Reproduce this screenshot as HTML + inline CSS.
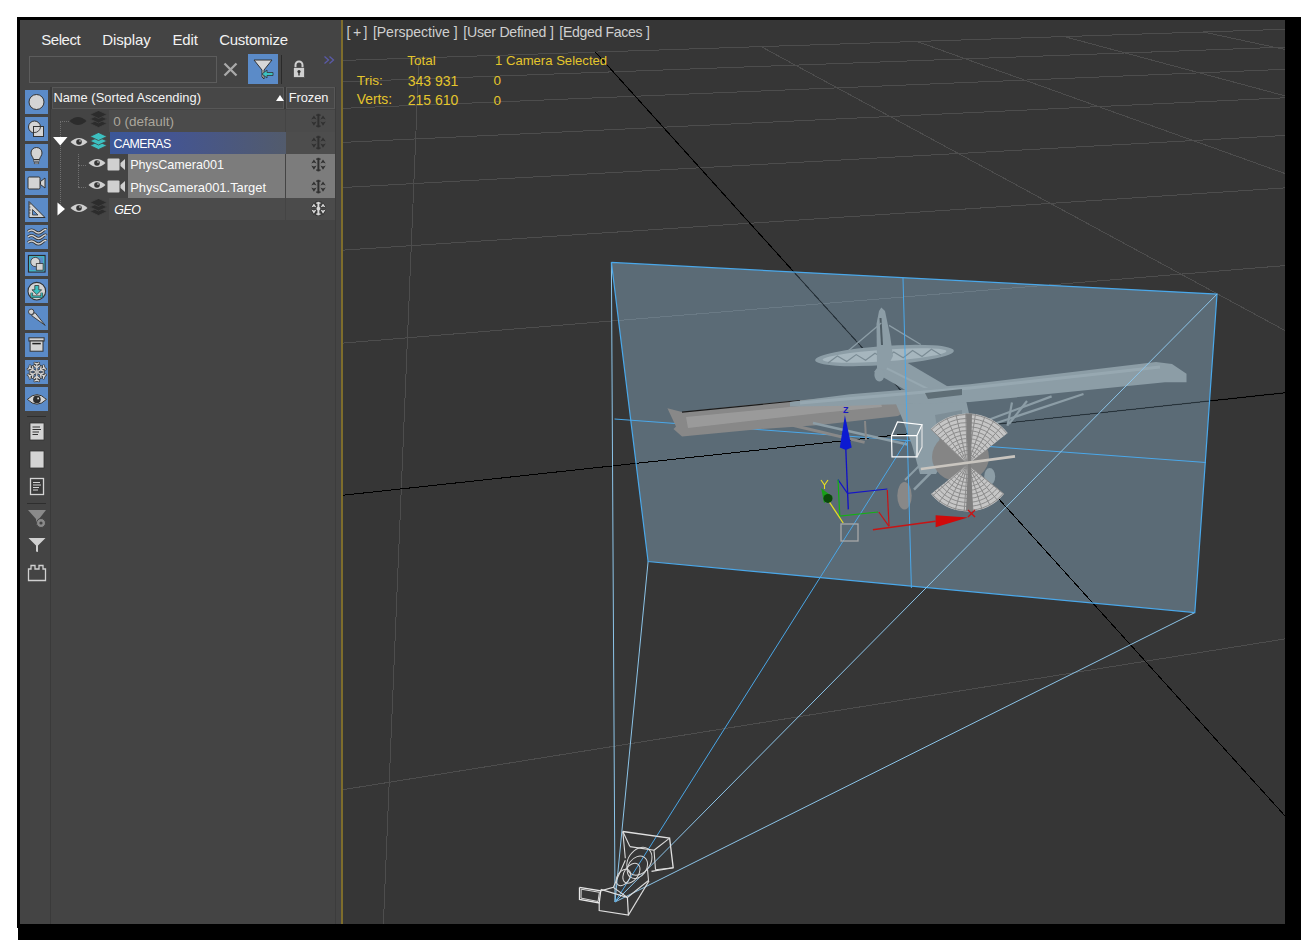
<!DOCTYPE html>
<html><head><meta charset="utf-8"><style>
html,body{margin:0;padding:0}
body{width:1305px;height:944px;background:#fff;position:relative;overflow:hidden;font-family:"Liberation Sans",sans-serif}
.t{position:absolute;white-space:nowrap;line-height:normal}
</style></head><body>
<div style="position:absolute;left:17px;top:17px;width:1284px;height:911px;background:#000"></div>
<div style="position:absolute;left:18px;top:924px;width:1283px;height:16px;background:#000"></div>
<div id="panel" style="position:absolute;left:20px;top:20px;width:321px;height:904px;background:#444;overflow:hidden">
  <!-- menu -->
  <div class="t" style="left:21.2px;top:11.3px;font-size:15px;letter-spacing:-0.45px;color:#f2f2f2">Select</div>
  <div class="t" style="left:82.2px;top:11.3px;font-size:15px;letter-spacing:-0.1px;color:#f2f2f2">Display</div>
  <div class="t" style="left:152.4px;top:11.3px;font-size:15px;letter-spacing:-0.1px;color:#f2f2f2">Edit</div>
  <div class="t" style="left:199.2px;top:11.3px;font-size:15px;letter-spacing:-0.25px;color:#f2f2f2">Customize</div>
  <!-- search box -->
  <div style="position:absolute;left:9px;top:36px;width:186px;height:25px;border:1px solid #5c5c5c;background:#434343"></div>
  <svg style="position:absolute;left:203px;top:41.5px" width="15" height="15"><path d="M1.5 1.5L13.5 13.5M13.5 1.5L1.5 13.5" stroke="#a9a9a9" stroke-width="2.3"/></svg>
  <div style="position:absolute;left:228px;top:34px;width:30px;height:30px;background:#5b8bc8"></div>
  <svg style="position:absolute;left:228px;top:34px" width="30" height="30"><path d="M6 6H24L16 16V25L14 23V16Z" fill="#d8d8d8" stroke="#333" stroke-width="1"/><path d="M14 20L19 16V18.5H25V21.5H19V24Z" fill="#3cc0c0" stroke="#333" stroke-width="0.8"/></svg>
  <div style="position:absolute;left:261px;top:35px;width:1px;height:29px;background:#2a2a2a"></div>
  <svg style="position:absolute;left:272px;top:39px" width="14" height="20"><path d="M3.5 9V6A3.5 3.5 0 0 1 10.5 6V9" fill="none" stroke="#d0d0d0" stroke-width="2"/><rect x="1.5" y="8.5" width="11" height="10" fill="#d0d0d0" stroke="#333" stroke-width="0.6"/><circle cx="7" cy="12.5" r="1.6" fill="#333"/><rect x="6.3" y="13" width="1.4" height="3.5" fill="#333"/></svg>
  <svg style="position:absolute;left:304px;top:36px" width="11" height="9"><path d="M0.5 0.5L4.5 4L0.5 7.5M5.5 0.5L9.5 4L5.5 7.5" fill="none" stroke="#5a5aa8" stroke-width="1.3"/></svg>
  <!-- column divider -->
  <div style="position:absolute;left:29.5px;top:67px;width:1px;height:837px;background:#3a3a3a"></div>
  <div style="position:absolute;left:315px;top:67px;width:1px;height:837px;background:#3c3c3c"></div>
  <!-- header -->
  <div style="position:absolute;left:30.7px;top:66.5px;width:234px;height:22px;background:#3a3a3a"></div>
  <div style="position:absolute;left:31.5px;top:67.3px;width:230.5px;height:19.5px;border:1px solid #575757;background:#474747"></div>
  <div style="position:absolute;left:265.3px;top:66.5px;width:50px;height:22px;background:#3a3a3a"></div>
  <div style="position:absolute;left:266.1px;top:67.3px;width:46.5px;height:19.5px;border:1px solid #575757;background:#474747"></div>
  <div class="t" style="left:33.4px;top:70.2px;font-size:12.9px;color:#f4f4f4">Name (Sorted Ascending)</div>
  <svg style="position:absolute;left:256px;top:75px" width="8" height="6"><path d="M0 6L4 0L8 6Z" fill="#fff"/></svg>
  <div class="t" style="left:268.8px;top:70.2px;font-size:12.9px;letter-spacing:-0.1px;color:#f4f4f4">Frozen</div>
  <!-- rows -->
  <div style="position:absolute;left:89px;top:89.5px;width:176px;height:22px;background:#4b4b4b"></div>
  <div style="position:absolute;left:266px;top:89.5px;width:49px;height:22px;background:#4b4b4b"></div>
  <div style="position:absolute;left:89.5px;top:111.5px;width:176px;height:22.5px;background:linear-gradient(90deg,#3b5798 0%,#445591 35%,#525b6c 100%)"></div>
  <div style="position:absolute;left:266px;top:111.5px;width:49px;height:22.5px;background:#4d4d4d"></div>
  <div style="position:absolute;left:107.7px;top:134px;width:157.5px;height:43.7px;background:#7c7c7c"></div>
  <div style="position:absolute;left:266px;top:134px;width:49px;height:43.7px;background:#7c7c7c"></div>
  <div style="position:absolute;left:89px;top:178.1px;width:176px;height:21.7px;background:#4b4b4b"></div>
  <div style="position:absolute;left:266px;top:178.1px;width:49px;height:21.7px;background:#4b4b4b"></div>
  <div class="t" style="left:93.3px;top:93.9px;font-size:13.5px;letter-spacing:0px;color:#aaa69c">0 (default)</div>
  <div class="t" style="left:93.6px;top:116.5px;font-size:12.4px;letter-spacing:-0.6px;color:#fff">CAMERAS</div>
  <div class="t" style="left:110.2px;top:138.3px;font-size:12.6px;letter-spacing:0px;color:#fafafa">PhysCamera001</div>
  <div class="t" style="left:110.2px;top:160px;font-size:12.95px;letter-spacing:0px;color:#fafafa">PhysCamera001.Target</div>
  <div class="t" style="left:94.2px;top:183px;font-size:12.4px;letter-spacing:-0.4px;color:#fff;font-style:italic">GEO</div>
  <div style="position:absolute;left:5px;top:70px;width:23px;height:24px;background:#5b8bc8"></div>
<svg style="position:absolute;left:5px;top:70px" width="23" height="24" viewBox="0 0 23 24"><circle cx="11.5" cy="12" r="7.5" fill="#d4d4d4" stroke="#333" stroke-width="1"/></svg>
<div style="position:absolute;left:5px;top:97px;width:23px;height:24px;background:#5b8bc8"></div>
<svg style="position:absolute;left:5px;top:97px" width="23" height="24" viewBox="0 0 23 24"><circle cx="9.5" cy="10" r="6" fill="#d4d4d4" stroke="#333" stroke-width="1"/><rect x="8.5" y="9.5" width="10" height="10" fill="#d4d4d4" stroke="#333" stroke-width="1"/><path d="M9 15.5A6 6 0 0 0 15.5 10" fill="none" stroke="#333" stroke-width="0.9"/></svg>
<div style="position:absolute;left:5px;top:124px;width:23px;height:24px;background:#5b8bc8"></div>
<svg style="position:absolute;left:5px;top:124px" width="23" height="24" viewBox="0 0 23 24"><path d="M11.5 3.5C15 3.5 17 6 17 9C17 11.5 15 13 14.5 15.5H8.5C8 13 6 11.5 6 9C6 6 8 3.5 11.5 3.5Z" fill="#d4d4d4" stroke="#333" stroke-width="1"/><rect x="8.5" y="16" width="6" height="1.6" fill="#d4d4d4" stroke="#333" stroke-width="0.5"/><rect x="9.2" y="18.3" width="4.6" height="1.5" fill="#d4d4d4" stroke="#333" stroke-width="0.5"/></svg>
<div style="position:absolute;left:5px;top:151px;width:23px;height:24px;background:#5b8bc8"></div>
<svg style="position:absolute;left:5px;top:151px" width="23" height="24" viewBox="0 0 23 24"><rect x="3" y="6" width="12" height="12" rx="1.2" fill="#d4d4d4" stroke="#333" stroke-width="1"/><path d="M15.5 10.5L20 7V17L15.5 13.5Z" fill="#d4d4d4" stroke="#333" stroke-width="1"/></svg>
<div style="position:absolute;left:5px;top:178px;width:23px;height:24px;background:#5b8bc8"></div>
<svg style="position:absolute;left:5px;top:178px" width="23" height="24" viewBox="0 0 23 24"><path d="M4 3.5L20 19.5H4Z" fill="#d4d4d4" stroke="#333" stroke-width="1"/><path d="M7.5 11.5L13 17H7.5Z" fill="#5b8bc8" stroke="#333" stroke-width="0.8"/><path d="M4 6H6M4 9H5.5M4 12H6M4 15H5.5" stroke="#333" stroke-width="0.7"/></svg>
<div style="position:absolute;left:5px;top:205px;width:23px;height:24px;background:#5b8bc8"></div>
<svg style="position:absolute;left:5px;top:205px" width="23" height="24" viewBox="0 0 23 24"><path d="M3 6.5Q6.5 3.5 10 6.5T17 6.5T21 5M3 12Q6.5 9 10 12T17 12T21 10.5M3 17.5Q6.5 14.5 10 17.5T17 17.5T21 16" fill="none" stroke="#333" stroke-width="3"/><path d="M3 6.5Q6.5 3.5 10 6.5T17 6.5T21 5M3 12Q6.5 9 10 12T17 12T21 10.5M3 17.5Q6.5 14.5 10 17.5T17 17.5T21 16" fill="none" stroke="#d4d4d4" stroke-width="1.6"/></svg>
<div style="position:absolute;left:5px;top:232px;width:23px;height:24px;background:#5b8bc8"></div>
<svg style="position:absolute;left:5px;top:232px" width="23" height="24" viewBox="0 0 23 24"><rect x="3.5" y="3.5" width="16.5" height="16.5" fill="#5b8bc8" stroke="#2a2a2a" stroke-width="1.2"/><rect x="4.8" y="4.8" width="14" height="14" fill="none" stroke="#3cc0c0" stroke-width="1.1"/><circle cx="10.3" cy="10" r="4.6" fill="#d4d4d4" stroke="#333" stroke-width="0.8"/><rect x="11.3" y="11.6" width="6.8" height="6.6" fill="#d4d4d4" stroke="#333" stroke-width="0.8"/></svg>
<div style="position:absolute;left:5px;top:259px;width:23px;height:24px;background:#5b8bc8"></div>
<svg style="position:absolute;left:5px;top:259px" width="23" height="24" viewBox="0 0 23 24"><circle cx="11.8" cy="12.2" r="8.8" fill="#d4d4d4" stroke="#333" stroke-width="1.1"/><path d="M9.8 6.5H13.8V10.8H16.6L11.8 15.6L7 10.8H9.8Z" fill="#3cc0c0" stroke="#333" stroke-width="0.8"/><path d="M6.8 13.8V17.8H16.8V13.8" fill="none" stroke="#333" stroke-width="2.6"/><path d="M6.8 13.8V17.8H16.8V13.8" fill="none" stroke="#3cc0c0" stroke-width="1.3"/></svg>
<div style="position:absolute;left:5px;top:286px;width:23px;height:24px;background:#5b8bc8"></div>
<svg style="position:absolute;left:5px;top:286px" width="23" height="24" viewBox="0 0 23 24"><path d="M6.6 9.6L10 6.6L20.2 19.4Z" fill="#d4d4d4" stroke="#333" stroke-width="0.9" stroke-linejoin="round"/><circle cx="6.2" cy="5.8" r="2.7" fill="#d4d4d4" stroke="#333" stroke-width="0.9"/></svg>
<div style="position:absolute;left:5px;top:313px;width:23px;height:24px;background:#5b8bc8"></div>
<svg style="position:absolute;left:5px;top:313px" width="23" height="24" viewBox="0 0 23 24"><rect x="3.9" y="4.8" width="15.2" height="3.2" fill="#d4d4d4" stroke="#333" stroke-width="1"/><rect x="5.1" y="8" width="12.9" height="10.2" fill="#d4d4d4" stroke="#333" stroke-width="1"/><path d="M7.3 10.6H15.8" stroke="#222" stroke-width="1.5"/></svg>
<div style="position:absolute;left:5px;top:340px;width:23px;height:24px;background:#5b8bc8"></div>
<svg style="position:absolute;left:5px;top:340px" width="23" height="24" viewBox="0 0 23 24"><g transform="translate(11.8 12)"><g transform="rotate(0)"><path d="M0 0V-8.6M-2.6 -6.4L0 -4.2L2.6 -6.4M-2 -9L0 -7.8L2 -9" fill="none" stroke="#3a3a3a" stroke-width="2.6" stroke-linecap="round"/></g><g transform="rotate(60)"><path d="M0 0V-8.6M-2.6 -6.4L0 -4.2L2.6 -6.4M-2 -9L0 -7.8L2 -9" fill="none" stroke="#3a3a3a" stroke-width="2.6" stroke-linecap="round"/></g><g transform="rotate(120)"><path d="M0 0V-8.6M-2.6 -6.4L0 -4.2L2.6 -6.4M-2 -9L0 -7.8L2 -9" fill="none" stroke="#3a3a3a" stroke-width="2.6" stroke-linecap="round"/></g><g transform="rotate(180)"><path d="M0 0V-8.6M-2.6 -6.4L0 -4.2L2.6 -6.4M-2 -9L0 -7.8L2 -9" fill="none" stroke="#3a3a3a" stroke-width="2.6" stroke-linecap="round"/></g><g transform="rotate(240)"><path d="M0 0V-8.6M-2.6 -6.4L0 -4.2L2.6 -6.4M-2 -9L0 -7.8L2 -9" fill="none" stroke="#3a3a3a" stroke-width="2.6" stroke-linecap="round"/></g><g transform="rotate(300)"><path d="M0 0V-8.6M-2.6 -6.4L0 -4.2L2.6 -6.4M-2 -9L0 -7.8L2 -9" fill="none" stroke="#3a3a3a" stroke-width="2.6" stroke-linecap="round"/></g><g transform="rotate(0)"><path d="M0 0V-8.6M-2.6 -6.4L0 -4.2L2.6 -6.4M-2 -9L0 -7.8L2 -9" fill="none" stroke="#d6d6d6" stroke-width="1.3" stroke-linecap="round"/></g><g transform="rotate(60)"><path d="M0 0V-8.6M-2.6 -6.4L0 -4.2L2.6 -6.4M-2 -9L0 -7.8L2 -9" fill="none" stroke="#d6d6d6" stroke-width="1.3" stroke-linecap="round"/></g><g transform="rotate(120)"><path d="M0 0V-8.6M-2.6 -6.4L0 -4.2L2.6 -6.4M-2 -9L0 -7.8L2 -9" fill="none" stroke="#d6d6d6" stroke-width="1.3" stroke-linecap="round"/></g><g transform="rotate(180)"><path d="M0 0V-8.6M-2.6 -6.4L0 -4.2L2.6 -6.4M-2 -9L0 -7.8L2 -9" fill="none" stroke="#d6d6d6" stroke-width="1.3" stroke-linecap="round"/></g><g transform="rotate(240)"><path d="M0 0V-8.6M-2.6 -6.4L0 -4.2L2.6 -6.4M-2 -9L0 -7.8L2 -9" fill="none" stroke="#d6d6d6" stroke-width="1.3" stroke-linecap="round"/></g><g transform="rotate(300)"><path d="M0 0V-8.6M-2.6 -6.4L0 -4.2L2.6 -6.4M-2 -9L0 -7.8L2 -9" fill="none" stroke="#d6d6d6" stroke-width="1.3" stroke-linecap="round"/></g><circle r="1.8" fill="#bdbdbd"/></g></svg>
<div style="position:absolute;left:5px;top:367px;width:23px;height:24px;background:#5b8bc8"></div>
<svg style="position:absolute;left:5px;top:367px" width="23" height="24" viewBox="0 0 23 24"><path d="M2.4 12.4Q11.9 2.8 21.4 12.4Q11.9 22 2.4 12.4Z" fill="#d4d4d4" stroke="#333" stroke-width="1"/><circle cx="11.9" cy="12.4" r="3.8" fill="#2c2c2c"/><rect x="12.3" y="10.6" width="1.7" height="1.7" fill="#d8d8d8"/></svg>
<div style="position:absolute;left:7px;top:396px;width:19px;height:1px;background:#2e2e2e"></div>
<div style="position:absolute;left:7px;top:483px;width:19px;height:1px;background:#2e2e2e"></div>
<svg style="position:absolute;left:9px;top:402px" width="16" height="19" viewBox="0 0 16 19"><rect x="1" y="1" width="14" height="17" fill="#d4d4d4" stroke="#333" stroke-width="0.8"/><path d="M3.5 5H11M3.5 7.5H12M3.5 10H10M3.5 12.5H9" stroke="#333" stroke-width="1"/></svg>
<svg style="position:absolute;left:9px;top:430px" width="16" height="19" viewBox="0 0 16 19"><rect x="1" y="1" width="14" height="17" fill="#d4d4d4" stroke="#333" stroke-width="0.8"/></svg>
<svg style="position:absolute;left:9px;top:457px" width="16" height="19" viewBox="0 0 16 19"><rect x="1.5" y="1.5" width="13" height="16" fill="#3a3a3a" stroke="#d4d4d4" stroke-width="1.3"/><path d="M4 5.5H11M4 8H12M4 10.5H10M4 13H9" stroke="#d4d4d4" stroke-width="1"/></svg>
<svg style="position:absolute;left:7px;top:489px" width="20" height="20" viewBox="0 0 20 20"><path d="M1 1H19L12 10V18L9 15V10Z" fill="#8a8a8a"/><circle cx="14" cy="14" r="4.5" fill="#8a8a8a" stroke="#444" stroke-width="1"/><circle cx="14" cy="14" r="1.6" fill="#444"/></svg>
<svg style="position:absolute;left:8px;top:517px" width="18" height="16" viewBox="0 0 18 16"><path d="M0.5 1H17.5L10 8.5V15L8 14.5V8.5Z" fill="#d0d0d0"/></svg>
<svg style="position:absolute;left:7px;top:544px" width="20" height="18" viewBox="0 0 20 18"><path d="M1.5 5V16.5H18.5V5H16V1.5H12V5H8V1.5H4V5Z" fill="none" stroke="#d0d0d0" stroke-width="1.3"/></svg>
<div style="position:absolute;left:40px;top:101px;width:0;height:88px;border-left:1px dotted #707070"></div>
<div style="position:absolute;left:40px;top:101px;width:9px;height:0;border-top:1px dotted #707070"></div>
<div style="position:absolute;left:58px;top:134px;width:0;height:33px;border-left:1px dotted #707070"></div>
<div style="position:absolute;left:58px;top:145px;width:8px;height:0;border-top:1px dotted #707070"></div>
<div style="position:absolute;left:58px;top:167px;width:8px;height:0;border-top:1px dotted #707070"></div>
<svg style="position:absolute;left:49px;top:96px" width="18" height="10" viewBox="0 0 18 10"><path d="M0.5 5Q9 -3 17.5 5Q9 13 0.5 5Z" fill="#2c2c2c"/></svg>
<svg style="position:absolute;left:70px;top:91px" width="17" height="18" viewBox="0 0 17 18"><path d="M8.5 8.5 L17 12.5 L8.5 16.5 L0 12.5Z" fill="#2c2c2c" stroke="#444" stroke-width="0.8"/><path d="M8.5 4.0 L17 8.0 L8.5 12.0 L0 8.0Z" fill="#2c2c2c" stroke="#444" stroke-width="0.8"/><path d="M8.5 -0.5 L17 3.5 L8.5 7.5 L0 3.5Z" fill="#2c2c2c" stroke="#444" stroke-width="0.8"/></svg>
<svg style="position:absolute;left:33px;top:117px" width="15" height="9" viewBox="0 0 15 9"><path d="M0 0H14.5L7.25 8.5Z" fill="#fff"/></svg>
<svg style="position:absolute;left:50px;top:117px" width="18" height="10" viewBox="0 0 18 10"><path d="M0.5 5Q9 -3 17.5 5Q9 13 0.5 5Z" fill="#d0d0d0"/><circle cx="9" cy="5" r="2.8" fill="#333"/><circle cx="10" cy="4" r="0.8" fill="#ddd"/></svg>
<svg style="position:absolute;left:70px;top:113px" width="17" height="18" viewBox="0 0 17 18"><path d="M8.5 8.5 L17 12.5 L8.5 16.5 L0 12.5Z" fill="#3cc0c0" stroke="#444" stroke-width="0.8"/><path d="M8.5 4.0 L17 8.0 L8.5 12.0 L0 8.0Z" fill="#3cc0c0" stroke="#444" stroke-width="0.8"/><path d="M8.5 -0.5 L17 3.5 L8.5 7.5 L0 3.5Z" fill="#3cc0c0" stroke="#444" stroke-width="0.8"/></svg>
<svg style="position:absolute;left:68px;top:138px" width="18" height="10" viewBox="0 0 18 10"><path d="M0.5 5Q9 -3 17.5 5Q9 13 0.5 5Z" fill="#d0d0d0"/><circle cx="9" cy="5" r="2.8" fill="#333"/><circle cx="10" cy="4" r="0.8" fill="#ddd"/></svg>
<svg style="position:absolute;left:87px;top:138px" width="19" height="13" viewBox="0 0 19 13"><rect x="0.5" y="0.5" width="12" height="12" rx="1" fill="#d0d0d0"/><path d="M13.5 5L18 1V12L13.5 8Z" fill="#d0d0d0"/></svg>
<svg style="position:absolute;left:68px;top:160px" width="18" height="10" viewBox="0 0 18 10"><path d="M0.5 5Q9 -3 17.5 5Q9 13 0.5 5Z" fill="#d0d0d0"/><circle cx="9" cy="5" r="2.8" fill="#333"/><circle cx="10" cy="4" r="0.8" fill="#ddd"/></svg>
<svg style="position:absolute;left:87px;top:160px" width="19" height="13" viewBox="0 0 19 13"><rect x="0.5" y="0.5" width="12" height="12" rx="1" fill="#d0d0d0"/><path d="M13.5 5L18 1V12L13.5 8Z" fill="#d0d0d0"/></svg>
<svg style="position:absolute;left:37px;top:182px" width="9" height="14" viewBox="0 0 9 14"><path d="M0.5 0.5L8 7L0.5 13.5Z" fill="#fff"/></svg>
<svg style="position:absolute;left:50px;top:183px" width="18" height="10" viewBox="0 0 18 10"><path d="M0.5 5Q9 -3 17.5 5Q9 13 0.5 5Z" fill="#d0d0d0"/><circle cx="9" cy="5" r="2.8" fill="#333"/><circle cx="10" cy="4" r="0.8" fill="#ddd"/></svg>
<svg style="position:absolute;left:70px;top:179px" width="17" height="18" viewBox="0 0 17 18"><path d="M8.5 8.5 L17 12.5 L8.5 16.5 L0 12.5Z" fill="#2c2c2c" stroke="#444" stroke-width="0.8"/><path d="M8.5 4.0 L17 8.0 L8.5 12.0 L0 8.0Z" fill="#2c2c2c" stroke="#444" stroke-width="0.8"/><path d="M8.5 -0.5 L17 3.5 L8.5 7.5 L0 3.5Z" fill="#2c2c2c" stroke="#444" stroke-width="0.8"/></svg>
<svg style="position:absolute;left:290.5px;top:93.3px" width="15" height="15" viewBox="0 0 15 15"><g fill="#303030"><rect x="6.4" y="0.8" width="2" height="13.6"/><rect x="5.2" y="1.4" width="4.4" height="1.4"/><rect x="5.2" y="12.4" width="4.4" height="1.4"/><path d="M2.9 2.6L5.6 6.6L2.9 5.6L0.3 6.6Z"/><path d="M12 2.6L14.7 6.6L12 5.6L9.4 6.6Z"/><path d="M2.9 12.8L5.6 8.6L2.9 9.6L0.3 8.6Z"/><path d="M12 12.8L14.7 8.6L12 9.6L9.4 8.6Z"/></g></svg>
<svg style="position:absolute;left:290.5px;top:115.3px" width="15" height="15" viewBox="0 0 15 15"><g fill="#303030"><rect x="6.4" y="0.8" width="2" height="13.6"/><rect x="5.2" y="1.4" width="4.4" height="1.4"/><rect x="5.2" y="12.4" width="4.4" height="1.4"/><path d="M2.9 2.6L5.6 6.6L2.9 5.6L0.3 6.6Z"/><path d="M12 2.6L14.7 6.6L12 5.6L9.4 6.6Z"/><path d="M2.9 12.8L5.6 8.6L2.9 9.6L0.3 8.6Z"/><path d="M12 12.8L14.7 8.6L12 9.6L9.4 8.6Z"/></g></svg>
<svg style="position:absolute;left:290.5px;top:137.3px" width="15" height="15" viewBox="0 0 15 15"><g fill="#303030"><rect x="6.4" y="0.8" width="2" height="13.6"/><rect x="5.2" y="1.4" width="4.4" height="1.4"/><rect x="5.2" y="12.4" width="4.4" height="1.4"/><path d="M2.9 2.6L5.6 6.6L2.9 5.6L0.3 6.6Z"/><path d="M12 2.6L14.7 6.6L12 5.6L9.4 6.6Z"/><path d="M2.9 12.8L5.6 8.6L2.9 9.6L0.3 8.6Z"/><path d="M12 12.8L14.7 8.6L12 9.6L9.4 8.6Z"/></g></svg>
<svg style="position:absolute;left:290.5px;top:159.3px" width="15" height="15" viewBox="0 0 15 15"><g fill="#303030"><rect x="6.4" y="0.8" width="2" height="13.6"/><rect x="5.2" y="1.4" width="4.4" height="1.4"/><rect x="5.2" y="12.4" width="4.4" height="1.4"/><path d="M2.9 2.6L5.6 6.6L2.9 5.6L0.3 6.6Z"/><path d="M12 2.6L14.7 6.6L12 5.6L9.4 6.6Z"/><path d="M2.9 12.8L5.6 8.6L2.9 9.6L0.3 8.6Z"/><path d="M12 12.8L14.7 8.6L12 9.6L9.4 8.6Z"/></g></svg>
<svg style="position:absolute;left:290.5px;top:181.3px" width="15" height="15" viewBox="0 0 15 15"><g fill="#303030" stroke="#303030" stroke-width="1.6"><rect x="6.4" y="0.8" width="2" height="13.6"/><rect x="5.2" y="1.4" width="4.4" height="1.4"/><rect x="5.2" y="12.4" width="4.4" height="1.4"/><path d="M2.9 2.6L5.6 6.6L2.9 5.6L0.3 6.6Z"/><path d="M12 2.6L14.7 6.6L12 5.6L9.4 6.6Z"/><path d="M2.9 12.8L5.6 8.6L2.9 9.6L0.3 8.6Z"/><path d="M12 12.8L14.7 8.6L12 9.6L9.4 8.6Z"/></g><g fill="#d8d8d8"><rect x="6.4" y="0.8" width="2" height="13.6"/><rect x="5.2" y="1.4" width="4.4" height="1.4"/><rect x="5.2" y="12.4" width="4.4" height="1.4"/><path d="M2.9 2.6L5.6 6.6L2.9 5.6L0.3 6.6Z"/><path d="M12 2.6L14.7 6.6L12 5.6L9.4 6.6Z"/><path d="M2.9 12.8L5.6 8.6L2.9 9.6L0.3 8.6Z"/><path d="M12 12.8L14.7 8.6L12 9.6L9.4 8.6Z"/></g><circle cx="7.4" cy="7.6" r="1.9" fill="#d8d8d8"/></svg>
</div>
<div style="position:absolute;left:341px;top:20px;width:2px;height:904px;background:#7e6d2c"></div>

<div style="position:absolute;left:343px;top:20px;width:942px;height:904px;background:#363636;overflow:hidden">
<svg width="942" height="904" style="position:absolute;left:0;top:0">
<g shape-rendering="crispEdges"><line x1="-1277.0" y1="82.7" x2="-107377.9" y2="18576.7" stroke="#4d4d4d" stroke-width="1"/>
<line x1="-1008.3" y1="73.8" x2="-89596.6" y2="18592.0" stroke="#4d4d4d" stroke-width="1"/>
<line x1="107473.8" y1="18761.2" x2="20232.0" y2="2543.5" stroke="#4d4d4d" stroke-width="1"/>
<line x1="-759.5" y1="65.6" x2="-71815.3" y2="18607.2" stroke="#4d4d4d" stroke-width="1"/>
<line x1="52792.8" y1="18714.2" x2="8564.7" y2="981.2" stroke="#4d4d4d" stroke-width="1"/>
<line x1="-528.3" y1="57.9" x2="-54034.0" y2="18622.5" stroke="#4d4d4d" stroke-width="1"/>
<line x1="-1888.1" y1="18667.3" x2="5454.7" y2="564.7" stroke="#4d4d4d" stroke-width="1"/>
<line x1="-313.1" y1="50.8" x2="-36252.7" y2="18637.8" stroke="#4d4d4d" stroke-width="1"/>
<line x1="-56569.1" y1="18620.3" x2="4013.6" y2="371.7" stroke="#4d4d4d" stroke-width="1"/>
<line x1="-112.1" y1="44.2" x2="-18471.4" y2="18653.0" stroke="#4d4d4d" stroke-width="1"/>
<line x1="-63726.9" y1="10968.1" x2="3182.2" y2="260.4" stroke="#4d4d4d" stroke-width="1"/>
<line x1="76.0" y1="37.9" x2="-690.1" y2="18668.3" stroke="#4d4d4d" stroke-width="1"/>
<line x1="-5032.3" y1="737.3" x2="2261.1" y2="137.0" stroke="#4d4d4d" stroke-width="1"/>
<line x1="418.1" y1="26.6" x2="34872.5" y2="18698.8" stroke="#4d4d4d" stroke-width="1"/>
<line x1="-3420.5" y1="456.3" x2="1979.3" y2="99.3" stroke="#4d4d4d" stroke-width="1"/>
<line x1="574.1" y1="21.5" x2="52653.8" y2="18714.1" stroke="#4d4d4d" stroke-width="1"/>
<line x1="-2581.0" y1="310.0" x2="1762.1" y2="70.2" stroke="#4d4d4d" stroke-width="1"/>
<line x1="721.3" y1="16.6" x2="70435.1" y2="18729.4" stroke="#4d4d4d" stroke-width="1"/>
<line x1="-2066.0" y1="220.2" x2="1589.6" y2="47.1" stroke="#4d4d4d" stroke-width="1"/>
<line x1="860.3" y1="12.0" x2="88216.3" y2="18744.6" stroke="#4d4d4d" stroke-width="1"/>
<line x1="-1717.8" y1="159.5" x2="1449.2" y2="28.3" stroke="#4d4d4d" stroke-width="1"/>
<line x1="991.8" y1="7.6" x2="105997.6" y2="18759.9" stroke="#4d4d4d" stroke-width="1"/>
<line x1="-1466.6" y1="115.8" x2="1332.8" y2="12.7" stroke="#4d4d4d" stroke-width="1"/>
<line x1="1116.4" y1="3.5" x2="123778.9" y2="18775.1" stroke="#4d4d4d" stroke-width="1"/>
<line x1="-1277.0" y1="82.7" x2="1234.7" y2="-0.4" stroke="#4d4d4d" stroke-width="1"/>
<line x1="1234.7" y1="-0.4" x2="141560.2" y2="18790.4" stroke="#4d4d4d" stroke-width="1"/></g><g shape-rendering="crispEdges"><line x1="-9388.9" y1="1496.7" x2="2641.2" y2="187.9" stroke="#000" stroke-width="1"/>
<line x1="252.4" y1="32.1" x2="17091.2" y2="18683.6" stroke="#000" stroke-width="1"/></g>
<polygon points="268.4,242.4 874.0,274.1 851.8,592.6 305.1,541.5" fill="rgb(160,205,237)" stroke="none" stroke-width="1" fill-opacity="0.35"/>
<g shape-rendering="crispEdges"><line x1="-9388.9" y1="1496.7" x2="594.1" y2="410.6" stroke="#000" stroke-width="1"/>
<line x1="594.1" y1="410.6" x2="17091.2" y2="18683.6" stroke="#000" stroke-width="1"/></g><g opacity="0.3"><line x1="594.1" y1="410.6" x2="2641.2" y2="187.9" stroke="#000" stroke-width="1.2"/>
<line x1="252.4" y1="32.1" x2="594.1" y2="410.6" stroke="#000" stroke-width="1.2"/></g>
<line x1="272.0" y1="882.0" x2="268.4" y2="242.4" stroke="#8cc4e8" stroke-width="1" />
<line x1="272.0" y1="882.0" x2="305.1" y2="541.5" stroke="#8cc4e8" stroke-width="1" />
<line x1="272.0" y1="882.0" x2="851.8" y2="592.6" stroke="#8cc4e8" stroke-width="1" />
<polyline points="268.4,242.4 874.0,274.1 851.8,592.6 305.1,541.5 268.4,242.4" fill="none" stroke="#4aa8ea" stroke-width="1.2" />
<line x1="271.5" y1="399.0" x2="863.0" y2="442.5" stroke="#4aa8ea" stroke-width="1" />
<polygon points="531.0,352.0 546.0,332.0 609.0,369.0 571.0,375.0" fill="#8c9da6" stroke="none" stroke-width="1" />
<line x1="537.0" y1="345.0" x2="587.0" y2="370.0" stroke="#9aabb4" stroke-width="2" opacity="0.8"/>
<ellipse cx="541.5" cy="335.5" rx="69.5" ry="9.5" fill="#8c9da6" stroke="none" stroke-width="1" transform="rotate(-4 541.5 335.5)" />
<ellipse cx="541.5" cy="335.5" rx="62.0" ry="5.8" fill="#a6b6be" stroke="none" stroke-width="1" transform="rotate(-4 541.5 335.5)" />
<polyline points="485.0,343.0 494.4,335.9 503.8,341.6 513.2,334.6 522.6,340.3 532.0,333.3 541.4,339.0 550.8,331.9 560.2,337.7 569.6,330.6 579.0,336.4 588.4,329.3 597.8,335.1" fill="none" stroke="#7a8b94" stroke-width="1.2" />
<polygon points="533.5,304.0 536.0,291.0 538.3,287.6 542.0,291.0 547.0,315.0 550.0,336.0 543.0,350.0 534.0,348.0" fill="#8c9da6" stroke="none" stroke-width="1" />
<line x1="537.5" y1="298.0" x2="539.0" y2="325.0" stroke="#4e5c64" stroke-width="2" />
<ellipse cx="536.4" cy="355.0" rx="5.0" ry="6.5" fill="#8c9da6" stroke="none" stroke-width="1" transform="rotate(0 536.4 355.0)" />
<line x1="505.3" y1="330.8" x2="538.3" y2="302.9" stroke="#8c9da6" stroke-width="1.3" />
<line x1="546.0" y1="305.4" x2="577.7" y2="324.5" stroke="#8c9da6" stroke-width="1.3" />
<polygon points="324.4,388.2 339.0,392.0 405.0,385.0 477.0,378.5 517.0,376.0 559.0,384.0 561.0,392.0 555.0,396.0 477.0,405.0 417.5,409.0 339.0,416.4 330.5,409.0 333.0,406.6" fill="#888888" stroke="none" stroke-width="1" />
<polygon points="343.0,397.0 477.0,384.0 537.0,380.0 539.0,387.0 477.0,393.0 345.0,408.0" fill="#a2a2a2" stroke="none" stroke-width="1" opacity="0.7"/>
<line x1="339.0" y1="392.1" x2="457.0" y2="380.5" stroke="#1a1a1a" stroke-width="1.2" />
<polygon points="553.0,384.0 623.0,380.0 627.0,398.0 612.0,420.0 593.0,454.0 577.0,454.0 569.0,425.0 559.0,398.0" fill="#8c9da6" stroke="none" stroke-width="1" />
<polygon points="592.0,395.0 619.0,390.0 619.0,412.0 597.0,425.0" fill="#74848d" stroke="none" stroke-width="1" opacity="0.6"/>
<polygon points="447.0,382.0 507.0,374.3 627.0,364.2 813.0,342.0 829.0,344.0 843.5,353.7 843.5,362.3 822.0,362.3 627.0,382.0 507.0,385.8 447.0,386.5" fill="#8c9da6" stroke="none" stroke-width="1" />
<polyline points="457.0,383.0 627.0,368.0 817.0,347.0" fill="none" stroke="#9aabb4" stroke-width="3" opacity="0.8"/>
<polygon points="582.0,373.0 619.0,369.0 619.0,375.0 585.0,379.0" fill="#5f6e76" stroke="none" stroke-width="1" />
<line x1="593.4" y1="423.0" x2="740.5" y2="374.0" stroke="#8c9da6" stroke-width="2.2" />
<line x1="642.4" y1="401.0" x2="708.6" y2="376.4" stroke="#8c9da6" stroke-width="2.2" />
<line x1="669.0" y1="382.5" x2="664.5" y2="405.8" stroke="#8c9da6" stroke-width="2.2" />
<line x1="684.0" y1="381.0" x2="666.0" y2="404.0" stroke="#8c9da6" stroke-width="2.2" />
<line x1="470.0" y1="403.0" x2="564.5" y2="424.5" stroke="#8c9da6" stroke-width="2.5" />
<line x1="448.6" y1="405.0" x2="521.6" y2="422.4" stroke="#888888" stroke-width="3" />
<line x1="522.0" y1="401.0" x2="523.0" y2="420.0" stroke="#888888" stroke-width="2" />
<line x1="571.0" y1="469.7" x2="593.0" y2="447.5" stroke="#8c9da6" stroke-width="2.5" />
<line x1="562.0" y1="460.0" x2="582.0" y2="440.0" stroke="#8c9da6" stroke-width="2" />
<ellipse cx="561.5" cy="475.7" rx="7.2" ry="13.8" fill="#888888" stroke="none" stroke-width="1" transform="rotate(0 561.5 475.7)" />
<ellipse cx="646.7" cy="456.4" rx="5.5" ry="8.5" fill="#8c9da6" stroke="none" stroke-width="1" transform="rotate(0 646.7 456.4)" />
<ellipse cx="617.5" cy="437.0" rx="28.5" ry="25.0" fill="#858585" stroke="none" stroke-width="1" transform="rotate(0 617.5 437.0)" />
<path d="M624.5,444.5 L587.8,409.1 A51.0 51.0 0 0 1 664.7,413.1 Z" fill="#c6c6c6"/>
<path d="M624.5,444.5 L661.0,474.1 A47.0 47.0 0 0 1 588.0,474.1 Z" fill="#c6c6c6"/>
<path d="M617.3,437.6 A10 10 0 0 1 632.4,438.3" fill="none" stroke="#8c8c8c" stroke-width="1"/><path d="M632.3,450.8 A10 10 0 0 1 616.7,450.8" fill="none" stroke="#8c8c8c" stroke-width="1"/><path d="M614.4,434.8 A14 14 0 0 1 635.5,435.9" fill="none" stroke="#8c8c8c" stroke-width="1"/><path d="M635.4,453.3 A14 14 0 0 1 613.6,453.3" fill="none" stroke="#8c8c8c" stroke-width="1"/><path d="M611.6,432.0 A18 18 0 0 1 638.7,433.4" fill="none" stroke="#8c8c8c" stroke-width="1"/><path d="M638.5,455.8 A18 18 0 0 1 610.5,455.8" fill="none" stroke="#8c8c8c" stroke-width="1"/><path d="M608.7,429.2 A22 22 0 0 1 641.8,431.0" fill="none" stroke="#8c8c8c" stroke-width="1"/><path d="M641.6,458.3 A22 22 0 0 1 607.4,458.3" fill="none" stroke="#8c8c8c" stroke-width="1"/><path d="M605.8,426.4 A26 26 0 0 1 645.0,428.5" fill="none" stroke="#8c8c8c" stroke-width="1"/><path d="M644.7,460.9 A26 26 0 0 1 604.3,460.9" fill="none" stroke="#8c8c8c" stroke-width="1"/><path d="M602.9,423.7 A30 30 0 0 1 648.1,426.0" fill="none" stroke="#8c8c8c" stroke-width="1"/><path d="M647.8,463.4 A30 30 0 0 1 601.2,463.4" fill="none" stroke="#8c8c8c" stroke-width="1"/><path d="M600.0,420.9 A34 34 0 0 1 651.3,423.6" fill="none" stroke="#8c8c8c" stroke-width="1"/><path d="M650.9,465.9 A34 34 0 0 1 598.1,465.9" fill="none" stroke="#8c8c8c" stroke-width="1"/><path d="M597.2,418.1 A38 38 0 0 1 654.4,421.1" fill="none" stroke="#8c8c8c" stroke-width="1"/><path d="M654.0,468.4 A38 38 0 0 1 595.0,468.4" fill="none" stroke="#8c8c8c" stroke-width="1"/><path d="M594.3,415.3 A42 42 0 0 1 657.6,418.6" fill="none" stroke="#8c8c8c" stroke-width="1"/><path d="M657.1,470.9 A42 42 0 0 1 591.9,470.9" fill="none" stroke="#8c8c8c" stroke-width="1"/><path d="M591.4,412.5 A46 46 0 0 1 660.7,416.2" fill="none" stroke="#8c8c8c" stroke-width="1"/><path d="M660.2,473.4 A46 46 0 0 1 588.8,473.4" fill="none" stroke="#8c8c8c" stroke-width="1"/><path d="M588.5,409.8 A50 50 0 0 1 663.9,413.7" fill="none" stroke="#8c8c8c" stroke-width="1"/><line x1="624.5" y1="444.5" x2="587.8" y2="409.1" stroke="#8c8c8c" stroke-width="1" /><line x1="624.5" y1="444.5" x2="595.2" y2="402.7" stroke="#8c8c8c" stroke-width="1" /><line x1="624.5" y1="444.5" x2="603.8" y2="397.9" stroke="#8c8c8c" stroke-width="1" /><line x1="624.5" y1="444.5" x2="613.0" y2="394.8" stroke="#8c8c8c" stroke-width="1" /><line x1="624.5" y1="444.5" x2="622.7" y2="393.5" stroke="#8c8c8c" stroke-width="1" /><line x1="624.5" y1="444.5" x2="632.5" y2="394.1" stroke="#8c8c8c" stroke-width="1" /><line x1="624.5" y1="444.5" x2="641.9" y2="396.6" stroke="#8c8c8c" stroke-width="1" /><line x1="624.5" y1="444.5" x2="650.8" y2="400.8" stroke="#8c8c8c" stroke-width="1" /><line x1="624.5" y1="444.5" x2="658.6" y2="406.6" stroke="#8c8c8c" stroke-width="1" /><line x1="624.5" y1="444.5" x2="661.0" y2="474.1" stroke="#8c8c8c" stroke-width="1" /><line x1="624.5" y1="444.5" x2="654.7" y2="480.5" stroke="#8c8c8c" stroke-width="1" /><line x1="624.5" y1="444.5" x2="647.3" y2="485.6" stroke="#8c8c8c" stroke-width="1" /><line x1="624.5" y1="444.5" x2="639.0" y2="489.2" stroke="#8c8c8c" stroke-width="1" /><line x1="624.5" y1="444.5" x2="630.2" y2="491.1" stroke="#8c8c8c" stroke-width="1" /><line x1="624.5" y1="444.5" x2="621.2" y2="491.4" stroke="#8c8c8c" stroke-width="1" /><line x1="624.5" y1="444.5" x2="612.3" y2="489.9" stroke="#8c8c8c" stroke-width="1" /><line x1="624.5" y1="444.5" x2="603.9" y2="486.7" stroke="#8c8c8c" stroke-width="1" /><line x1="624.5" y1="444.5" x2="596.2" y2="482.0" stroke="#8c8c8c" stroke-width="1" /><line x1="624.5" y1="444.5" x2="589.6" y2="475.9" stroke="#8c8c8c" stroke-width="1" />
<path d="M624.5,444.5 L587.8,409.1 A51.0 51.0 0 0 1 664.7,413.1 Z" fill="none"/>
<polygon points="623.0,393.5 629.0,393.5 628.0,444.0 630.0,491.0 623.0,491.0 625.0,444.0" fill="#7e7e7e" stroke="none" stroke-width="1" />
<line x1="577.8" y1="449.0" x2="672.0" y2="436.4" stroke="#c9c5bf" stroke-width="2.6" /><line x1="272.0" y1="882.0" x2="874.0" y2="274.1" stroke="#8cc4e8" stroke-width="1" />
<line x1="272.0" y1="882.0" x2="564.0" y2="420.0" stroke="#4aa6e6" stroke-width="1" />
<line x1="560.0" y1="258.0" x2="568.4" y2="568.0" stroke="#4aa8ea" stroke-width="1" />
<line x1="502.8" y1="429.0" x2="505.3" y2="489.4" stroke="#1010c8" stroke-width="1.3" />
<polygon points="501.9,395.3 496.8,427.5 502.8,430.0 508.7,427.5" fill="#0c1ad2" stroke="none" stroke-width="1" />
<text x="500.0" y="393.0" font-family="Liberation Sans" font-size="9" font-weight="bold" fill="#1818c0">Z</text>
<polyline points="495.0,459.7 504.5,473.3 544.3,469.0" fill="none" stroke="#1414c8" stroke-width="1.2" />
<polyline points="544.3,470.0 546.0,506.0" fill="none" stroke="#c81414" stroke-width="1.2" />
<polyline points="535.8,492.0 546.0,506.4" fill="none" stroke="#c81414" stroke-width="1.2" />
<polyline points="495.0,459.7 496.8,496.2 535.0,492.0" fill="none" stroke="#14b014" stroke-width="1.2" />
<line x1="529.9" y1="509.7" x2="592.6" y2="501.3" stroke="#c81414" stroke-width="1.4" />
<polygon points="592.6,495.3 592.6,507.2 624.8,497.5" fill="#d00a0a" stroke="none" stroke-width="1" />
<polyline points="625.0,490.0 632.0,497.0" fill="none" stroke="#d01010" stroke-width="1.2" />
<polyline points="632.0,490.0 625.0,497.0" fill="none" stroke="#d01010" stroke-width="1.2" />
<line x1="485.0" y1="480.0" x2="500.2" y2="503.0" stroke="#e6e020" stroke-width="1.3" />
<polygon points="478.2,468.2 481.0,483.0 490.0,477.0" fill="#18a018" stroke="none" stroke-width="1" />
<ellipse cx="485.0" cy="478.4" rx="4.5" ry="4.5" fill="#0a4a0a" stroke="none" stroke-width="1" transform="rotate(0 485.0 478.4)" />
<polyline points="478.0,460.0 481.5,465.0 485.0,460.0" fill="none" stroke="#e6e020" stroke-width="1.1" />
<line x1="481.5" y1="465.0" x2="481.5" y2="469.0" stroke="#e6e020" stroke-width="1.1" />
<rect x="498.0" y="504.0" width="17" height="17" fill="none" stroke="#a8a8a8" stroke-width="1.3"/>
<polyline points="548.5,415.7 554.5,402.0 579.0,404.7 574.0,415.5 548.5,415.7 549.0,436.9 574.0,436.9 574.0,415.5" fill="none" stroke="#ffffff" stroke-width="1.2" />
<polyline points="579.0,404.7 579.0,427.0 574.0,436.9" fill="none" stroke="#e8e8e8" stroke-width="1.1" />
<polyline points="279.8,811.5 326.6,818.1 330.2,847.8 308.5,851.3" fill="none" stroke="#e0e0e0" stroke-width="1.3" />
<polyline points="286.9,826.6 311.0,830.2 312.5,849.8" fill="none" stroke="#dcdcdc" stroke-width="1.1" />
<polyline points="279.8,811.5 286.9,826.6" fill="none" stroke="#dcdcdc" stroke-width="1.1" />
<polyline points="326.6,818.1 311.0,830.2" fill="none" stroke="#dcdcdc" stroke-width="1.1" />
<polyline points="330.2,847.8 312.5,849.8" fill="none" stroke="#dcdcdc" stroke-width="1.1" />
<polyline points="279.8,811.5 282.3,838.2" fill="none" stroke="#dcdcdc" stroke-width="1.1" />
<polyline points="236.5,867.4 257.7,870.9 256.2,883.0 236.5,879.5 236.5,867.4" fill="none" stroke="#e8e8e8" stroke-width="1.3" />
<polyline points="238.2,869.2 256.4,872.3 255.0,881.5 238.0,878.1 238.2,869.2" fill="none" stroke="#d8d8d8" stroke-width="1.0" />
<polyline points="257.7,869.4 284.4,877.5 285.4,895.1 256.2,890.6 256.2,883.0" fill="none" stroke="#e0e0e0" stroke-width="1.2" />
<polyline points="257.7,870.9 270.3,867.4 282.3,840.2" fill="none" stroke="#dcdcdc" stroke-width="1.1" />
<polyline points="284.4,877.5 305.5,860.4 304.5,849.3" fill="none" stroke="#dcdcdc" stroke-width="1.1" />
<polyline points="285.4,895.1 306.0,860.9" fill="none" stroke="#dcdcdc" stroke-width="1.1" />
<polyline points="270.3,867.4 284.4,877.5" fill="none" stroke="#dcdcdc" stroke-width="1.1" />
<ellipse cx="296.4" cy="841.2" rx="11.1" ry="15.1" fill="none" stroke="#d8d8d8" stroke-width="1" transform="rotate(35 296.4 841.2)" />
<ellipse cx="294.4" cy="847.3" rx="9.1" ry="12.1" fill="none" stroke="#d8d8d8" stroke-width="1" transform="rotate(35 294.4 847.3)" />
<ellipse cx="288.4" cy="853.3" rx="7.0" ry="11.1" fill="none" stroke="#d8d8d8" stroke-width="1" transform="rotate(35 288.4 853.3)" />
<ellipse cx="280.3" cy="857.4" rx="6.0" ry="9.1" fill="none" stroke="#d8d8d8" stroke-width="1" transform="rotate(35 280.3 857.4)" />
</svg>
<div class="t" style="left:3.6px;top:4.0px;font-size:14.1px;color:#cfcfcf;letter-spacing:2.4px">[+]</div>
<div class="t" style="left:29.9px;top:4.0px;font-size:14.1px;color:#cfcfcf;letter-spacing:-0.05px">[Perspective ]</div>
<div class="t" style="left:120.3px;top:4.0px;font-size:14.1px;color:#cfcfcf;letter-spacing:-0.25px">[User Defined ]</div>
<div class="t" style="left:216.3px;top:4.0px;font-size:14.1px;color:#cfcfcf;letter-spacing:-0.33px">[Edged Faces ]</div>
<div class="t" style="left:64.2px;top:32.9px;font-size:13.5px;color:#e4c52c;">Total</div>
<div class="t" style="left:152.0px;top:33.2px;font-size:13.1px;color:#e4c52c;">1 Camera Selected</div>
<div class="t" style="left:13.8px;top:52.8px;font-size:13.7px;color:#e4c52c;">Tris:</div>
<div class="t" style="left:64.8px;top:52.5px;font-size:14px;color:#e4c52c;">343 931</div>
<div class="t" style="left:150.6px;top:53.0px;font-size:13.5px;color:#e4c52c;">0</div>
<div class="t" style="left:13.8px;top:72.3px;font-size:13.8px;color:#e4c52c;">Verts:</div>
<div class="t" style="left:64.8px;top:72.1px;font-size:14px;color:#e4c52c;">215 610</div>
<div class="t" style="left:150.6px;top:72.6px;font-size:13.5px;color:#e4c52c;">0</div>
</div>
</body></html>
